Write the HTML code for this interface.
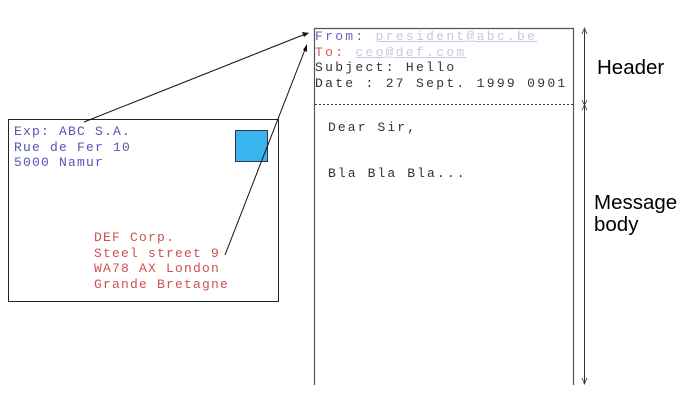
<!DOCTYPE html><html><head><style>
body{margin:0;width:689px;height:403px;background:#fff;position:relative;overflow:hidden;font-family:"Liberation Mono",monospace}
.t{position:absolute;font-size:13px;line-height:15.5px;white-space:pre}
.s{position:absolute;font-family:"Liberation Sans",sans-serif;font-size:20.5px;line-height:22px;color:#000}
</style></head><body>
<svg width="689" height="403" style="position:absolute;left:0;top:0">
<rect x="8.5" y="119.5" width="270" height="182" fill="none" stroke="#222" stroke-width="1"/>
<rect x="235.5" y="130.5" width="32" height="31" fill="#3ab4ee" stroke="#335" stroke-width="1"/>
<polyline points="314.5,385 314.5,28.5 573.5,28.5 573.5,385" fill="none" stroke="#555" stroke-width="1.2"/>
<line x1="315" y1="104.5" x2="573" y2="104.5" stroke="#333" stroke-dasharray="2,2"/>
<line x1="584.5" y1="30" x2="584.5" y2="383" stroke="#333"/>
<path d="M582,34 L584.5,28 L587,34 M582,100 L584.5,105 L587,100 M582,110 L584.5,105 L587,110 M582,378 L584.5,384 L587,378" fill="none" stroke="#333" stroke-width="0.8"/>
<line x1="84" y1="122" x2="308" y2="33" stroke="#111"/>
<path d="M302,32 L309,33 L304,37Z" fill="#111"/>
<line x1="225" y1="255" x2="306" y2="47" stroke="#111"/>
<path d="M303,50 L307,44 L307,52Z" fill="#111"/>
</svg>
<div class="t" style="left:14px;top:124px;color:#5555bb;letter-spacing:1.2px">Exp: ABC S.A.
Rue de Fer 10
5000 Namur</div>
<div class="t" style="left:94px;top:230px;color:#d05050;letter-spacing:1.2px">DEF Corp.
Steel street 9
WA78 AX London
Grande Bretagne</div>
<div class="t" style="left:315px;top:29px;line-height:15.5px;letter-spacing:2.3px"><span style="color:#6666bb">From: </span><span style="color:#c8c8e0;text-decoration:underline">president@abc.be</span>
<span style="color:#dd5555">To: </span><span style="color:#c8c8e0;text-decoration:underline">ceo@def.com</span>
<span style="color:#333">Subject: Hello
Date : 27 Sept. 1999 0901</span></div>
<div class="t" style="left:328px;top:120px;color:#333;letter-spacing:2.1px">Dear Sir,</div>
<div class="t" style="left:328px;top:166px;color:#333;letter-spacing:2.1px">Bla Bla Bla...</div>
<div class="s" style="left:597px;top:57px">Header</div>
<div class="s" style="left:594px;top:192px;line-height:22px">Message<br>body</div>
</body></html>
